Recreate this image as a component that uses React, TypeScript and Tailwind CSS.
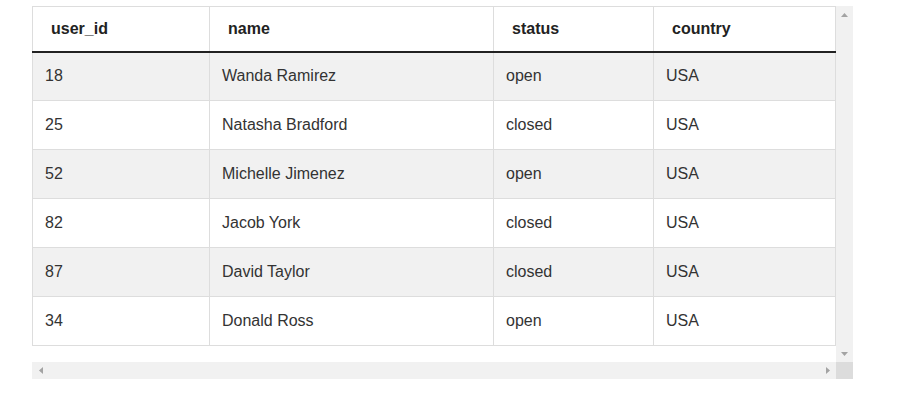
import React from 'react';

const rows = [
  { id: 18, name: 'Wanda Ramirez', status: 'open', country: 'USA' },
  { id: 25, name: 'Natasha Bradford', status: 'closed', country: 'USA' },
  { id: 52, name: 'Michelle Jimenez', status: 'open', country: 'USA' },
  { id: 82, name: 'Jacob York', status: 'closed', country: 'USA' },
  { id: 87, name: 'David Taylor', status: 'closed', country: 'USA' },
  { id: 34, name: 'Donald Ross', status: 'open', country: 'USA' },
];

const columns = ['user_id', 'name', 'status', 'country'];

// little scrollbar arrow, drawn as a triangle
const Arrow = ({ dir }: { dir: 'up' | 'down' | 'left' | 'right' }) => {
  const points = {
    up: '0,4 7,4 3.5,0',
    down: '0,0 7,0 3.5,4',
    left: '4,0 4,7 0,3.5',
    right: '0,0 0,7 4,3.5',
  }[dir];
  const vertical = dir === 'up' || dir === 'down';
  return (
    <svg width={vertical ? 7 : 4} height={vertical ? 4 : 7} viewBox={vertical ? '0 0 7 4' : '0 0 4 7'}>
      <polygon points={points} fill="#a3a3a3" />
    </svg>
  );
};

export default function App() {
  return (
    <div
      className="w-[910px] h-[400px] bg-white pt-[6px] pl-[32px]"
      style={{ fontFamily: '"Liberation Sans", Arial, sans-serif' }}
    >
      <div className="grid grid-cols-[804px_17px] grid-rows-[356px_17px] w-[821px]">
        <div className="overflow-hidden">
          <table className="table-fixed border-collapse w-[804px] text-[16px] leading-[18px]">
            <colgroup>
              <col className="w-[177px]" />
              <col className="w-[284px]" />
              <col className="w-[160px]" />
              <col className="w-[182px]" />
            </colgroup>
            <thead>
              <tr>
                {columns.map((c) => (
                  <th
                    key={c}
                    className="h-[45px] px-[18px] text-left font-bold text-[#222] border border-[#dddddd] border-b-2 border-b-[#222]"
                  >
                    {c}
                  </th>
                ))}
              </tr>
            </thead>
            <tbody>
              {rows.map((r, i) => (
                <tr key={r.id} className={i % 2 === 0 ? 'bg-[#f1f1f1]' : 'bg-white'}>
                  <td className="h-[49px] px-[12px] text-[#333] border border-[#dddddd]">{r.id}</td>
                  <td className="h-[49px] px-[12px] text-[#333] border border-[#dddddd]">{r.name}</td>
                  <td className="h-[49px] px-[12px] text-[#333] border border-[#dddddd]">{r.status}</td>
                  <td className="h-[49px] px-[12px] text-[#333] border border-[#dddddd]">{r.country}</td>
                </tr>
              ))}
            </tbody>
          </table>
        </div>

        {/* vertical scrollbar */}
        <div className="flex flex-col justify-between bg-[#f1f1f1]">
          <div className="h-[17px] flex items-center justify-center">
            <Arrow dir="up" />
          </div>
          <div className="h-[17px] flex items-center justify-center">
            <Arrow dir="down" />
          </div>
        </div>

        {/* horizontal scrollbar */}
        <div className="flex justify-between bg-[#f1f1f1]">
          <div className="w-[17px] flex items-center justify-center">
            <Arrow dir="left" />
          </div>
          <div className="w-[17px] flex items-center justify-center">
            <Arrow dir="right" />
          </div>
        </div>

        {/* corner */}
        <div className="bg-[#dcdcdc]" />
      </div>
    </div>
  );
}
